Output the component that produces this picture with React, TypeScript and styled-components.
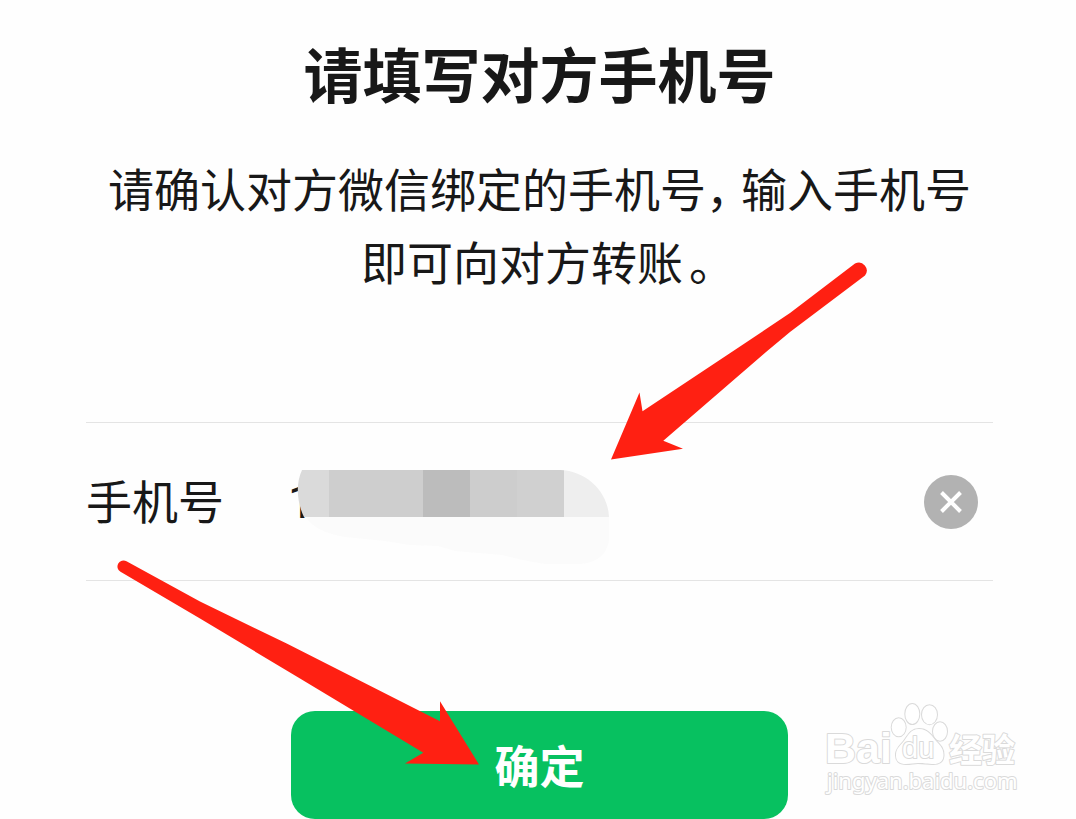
import React, { useState } from "react";
import styled, { createGlobalStyle } from "styled-components";

const GlobalStyle = createGlobalStyle`
  * { box-sizing: border-box; }
  body {
    margin: 0;
    background: #fefefe;
    color: #181818;
    font-family: "Noto Sans CJK SC", sans-serif;
  }
`;

const Page = styled.main`
  position: relative;
  overflow: hidden;
  display: flex;
  flex-direction: column;
  padding: 33px 83px 0 86px;
`;

const Title = styled.h1`
  margin: 0;
  font-size: 59px;
  line-height: 80px;
  font-weight: 700;
  text-align: center;
`;

const Description = styled.p`
  margin: 38px 0 0;
  font-size: 46px;
  line-height: 73px;
  text-align: center;
`;

const Punctuation = styled.span<{ $before: number; $after: number }>`
  padding: 0 ${(p) => p.$after}px 0 ${(p) => p.$before}px;
  font-feature-settings: "halt";
`;

const Form = styled.form`
  display: flex;
  flex-direction: column;
  align-items: center;
  margin-top: 125px;
`;

const Field = styled.div`
  display: flex;
  align-items: center;
  width: 100%;
  height: 159px;
  padding-right: 15px;
  border-top: 1px solid #e4e4e4;
  border-bottom: 1px solid #e4e4e4;
`;

const Label = styled.label`
  flex: none;
  width: 202px;
  padding-bottom: 6px;
  font-size: 46px;
  line-height: 74px;
`;

const InputWrap = styled.div`
  position: relative;
  flex: 1;
  min-width: 0;
  display: flex;
`;

const PhoneInput = styled.input`
  width: 100%;
  height: 74px;
  padding: 0;
  border: 0;
  outline: 0;
  background: transparent;
  color: inherit;
  font-family: Roboto, "Noto Sans CJK SC", sans-serif;
  font-size: 46px;
`;

const Mosaic = styled.svg`
  position: absolute;
  top: 4px;
  left: 8px;
  pointer-events: none;
`;

const ClearButton = styled.button`
  flex: none;
  display: flex;
  align-items: center;
  justify-content: center;
  width: 54px;
  height: 54px;
  padding: 0;
  border: 0;
  border-radius: 50%;
  background: #b2b2b2;
`;

const ConfirmButton = styled.button`
  width: 497px;
  max-width: 100%;
  height: 108px;
  margin-top: 130px;
  padding: 0 0 2px;
  border: 0;
  border-radius: 24px;
  background: #07c160;
  color: #fff;
  font-family: inherit;
  font-size: 45px;
  font-weight: 700;
`;

const Arrow = styled.svg<{ $top: number; $shift: number }>`
  position: absolute;
  top: ${(p) => p.$top}px;
  left: calc(50% + ${(p) => p.$shift}px);
  fill: #ff2012;
  pointer-events: none;
`;

const Watermark = styled.svg`
  position: absolute;
  right: 52px;
  bottom: 15px;
  pointer-events: none;
  fill: #fff;
  stroke: #dadada;
  stroke-width: 2;
  paint-order: stroke;
  stroke-linejoin: round;
`;

export default function App() {
  const [phone, setPhone] = useState("1");
  return (
    <>
      <GlobalStyle />
      <Page>
        <Title>请填写对方手机号</Title>
        <Description>
          请确认对方微信绑定的手机号
          <Punctuation $before={0} $after={12}>，</Punctuation>
          输入手机号
          <br />
          即可向对方转账
          <Punctuation $before={6} $after={6}>。</Punctuation>
        </Description>
        <Form onSubmit={(e) => e.preventDefault()}>
          <Field>
            <Label htmlFor="phone">手机号</Label>
            <InputWrap>
              <PhoneInput
                id="phone"
                type="tel"
                value={phone}
                onChange={(e) => setPhone(e.target.value)}
              />
              <Mosaic width="316" height="98" viewBox="296 469 316 98" aria-hidden="true">
                <defs>
                  <clipPath id="smear">
                    <path d="M302 470H560C588 471 608 493 609 517H304C299 507 294 487 302 470Z" />
                  </clipPath>
                </defs>
                <path
                  d="M306 517H609V540Q606 562 580 564L545 564Q520 560 502 555L455 551L438 546L410 545L385 541L345 537Q315 532 306 517Z"
                  fill="#fbfbfb"
                />
                <g clipPath="url(#smear)" shapeRendering="crispEdges">
                  <rect x="296" y="470" width="33" height="47" fill="#dadada" />
                  <rect x="329" y="470" width="94" height="47" fill="#cecece" />
                  <rect x="423" y="470" width="47" height="47" fill="#bcbcbc" />
                  <rect x="470" y="470" width="47" height="47" fill="#cdcdcd" />
                  <rect x="517" y="470" width="47" height="47" fill="#d0d0d0" />
                  <rect x="564" y="470" width="46" height="47" fill="#eeeeee" />
                </g>
              </Mosaic>
            </InputWrap>
            <ClearButton type="button" aria-label="清除" onClick={() => setPhone("")}>
              <svg width="22" height="22" viewBox="0 0 22 22" stroke="#fff" strokeWidth="4">
                <path d="M1.5 1.5L20.5 20.5M20.5 1.5L1.5 20.5" />
              </svg>
            </ClearButton>
          </Field>
          <ConfirmButton type="submit">确定</ConfirmButton>
        </Form>

        <Arrow $top={255} $shift={67} width="270" height="210" viewBox="605 255 270 210" aria-hidden="true">
          <path d="M855 263.5A8 8 0 0 1 865 275.5L790 332L766 352L663.3 440.7L683 448.7L611 459.5L639.5 392.5L642.5 411.3L740 346.5L790 313Z" />
        </Arrow>
        <Arrow $top={555} $shift={-423} width="370" height="215" viewBox="115 555 370 215" aria-hidden="true">
          <path d="M126.5 561.3A6 6 0 0 0 120.5 571.8L200 618.5L300 678.5L423.3 752.7L405 763.5L479 764.5L440 701.2V721.3L286.7 643.5L200 601.5Z" />
        </Arrow>

        <Watermark width="204" height="104" viewBox="820 700 204 104" aria-hidden="true">
          <text x="825" y="763" fontFamily="Liberation Sans, sans-serif" fontWeight="700" fontSize="43">
            Bai
          </text>
          <ellipse cx="898.7" cy="727.3" rx="7" ry="9" />
          <ellipse cx="912.3" cy="714" rx="7" ry="10" />
          <ellipse cx="929.5" cy="714.7" rx="7.5" ry="9.5" />
          <ellipse cx="940" cy="731.5" rx="7" ry="9.3" />
          <path d="M919 729C928 729 932 736 936 741C941 746 943.5 749 943.5 755C943.5 761.5 939 764.5 932 764C925 763.5 922 763 918 763C914 763 911 764 906 764C899 764 895.5 761 896 754C896.5 748 900 746 904 741C908 736 910 729 919 729Z" />
          <text x="902" y="758" fontFamily="Liberation Sans, sans-serif" fontSize="29">
            du
          </text>
          <text x="949" y="762" fontFamily="Noto Sans CJK SC, sans-serif" fontWeight="700" fontSize="33">
            经验
          </text>
          <text x="827" y="789" fontFamily="Noto Sans, sans-serif" fontSize="22">
            jingyan.baidu.com
          </text>
        </Watermark>
      </Page>
    </>
  );
}
